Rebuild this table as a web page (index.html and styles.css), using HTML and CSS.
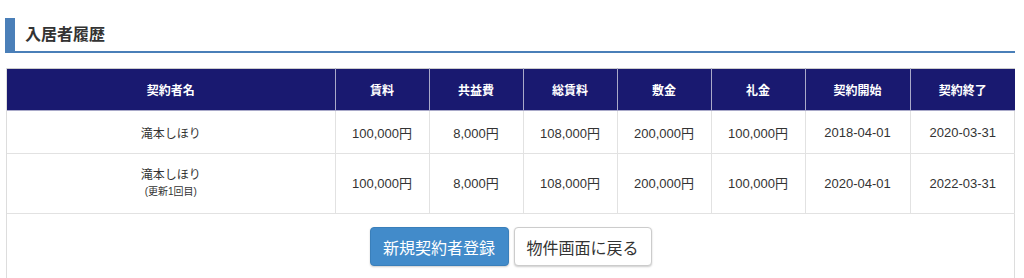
FILE: index.html
```html
<!DOCTYPE html>
<html lang="ja">
<head>
<meta charset="utf-8">
<link rel="stylesheet" href="styles.css">
</head>
<body>
<div class="page">
  <h2 class="section-title">入居者履歴</h2>
  <div class="panel">
    <table class="history">
      <colgroup>
        <col class="c-name">
        <col class="c-num"><col class="c-num"><col class="c-num"><col class="c-num"><col class="c-num">
        <col class="c-date"><col class="c-date">
      </colgroup>
      <thead>
        <tr>
          <th>契約者名</th><th>賃料</th><th>共益費</th><th>総賃料</th><th>敷金</th><th>礼金</th><th>契約開始</th><th>契約終了</th>
        </tr>
      </thead>
      <tbody>
        <tr class="row">
          <td class="name">滝本しほり</td><td>100,000円</td><td>8,000円</td><td>108,000円</td><td>200,000円</td><td>100,000円</td><td>2018-04-01</td><td>2020-03-31</td>
        </tr>
        <tr class="row row-tall">
          <td class="name">滝本しほり<br><span class="note">(更新1回目)</span></td><td>100,000円</td><td>8,000円</td><td>108,000円</td><td>200,000円</td><td>100,000円</td><td>2020-04-01</td><td>2022-03-31</td>
        </tr>
      </tbody>
    </table>
    <div class="actions">
      <button class="btn btn-primary">新規契約者登録</button>
      <button class="btn btn-default">物件画面に戻る</button>
    </div>
  </div>
</div>
</body>
</html>
```
FILE: styles.css
```css
* { box-sizing: border-box; }
html, body { margin: 0; padding: 0; background: #fff; }
body {
  font-family: "Liberation Sans", "Noto Sans CJK JP", sans-serif;
  color: #333;
  font-size: 12px;
}
.page { padding: 18px 9px 0 5px; }
.section-title {
  margin: 0 0 15px 0;
  height: 35px;
  line-height: 33px;
  font-size: 16px;
  font-weight: bold;
  color: #333;
  border-left: 10px solid #4a7fb8;
  border-bottom: 2px solid #4a7fb8;
  padding-left: 10px;
}
.panel {
  border-left: 1px solid #ddd;
  border-right: 1px solid #ddd;
  margin-left: 1px;
  height: 220px;
}
.history {
  width: 100%;
  border-collapse: collapse;
  table-layout: fixed;
}
.c-name { width: 328px; }
.c-num { width: 94px; }
.c-date { width: 105px; }
.history th {
  background: #191970;
  color: #fff;
  font-weight: bold;
  font-size: 12px;
  height: 42px;
  padding: 0;
  border: 1px solid #a9a9c9;
  border-top-color: #ccc;
  text-align: center;
}
.history td {
  height: 43px;
  padding: 0;
  border: 1px solid #e2e2e2;
  text-align: center;
  vertical-align: middle;
  font-size: 13px;
  color: #333;
}
.history td.name { font-size: 12px; }
.history tr:first-child td { border-top: none; }
.history td:first-child, .history th:first-child { border-left: none; }
.history td:last-child, .history th:last-child { border-right: none; }
.history .row-tall td { height: 60px; line-height: 16px; }
.note { font-size: 10px; }
.actions {
  display: flex;
  justify-content: center;
  gap: 5px;
  padding-top: 13px;
}
.btn {
  font-family: "Liberation Sans", "Noto Sans CJK JP", sans-serif;
  font-size: 16px;
  height: 39px;
  padding: 0 12px;
  border-radius: 4px;
  border: 1px solid #ccc;
  box-shadow: 0 1px 2px rgba(0,0,0,0.2);
  cursor: pointer;
}
.btn-primary {
  background: #428bca;
  border-color: #3a7fba;
  color: #fff;
  width: 139px;
}
.btn-default {
  background: #fff;
  color: #333;
  width: 138px;
}
```
